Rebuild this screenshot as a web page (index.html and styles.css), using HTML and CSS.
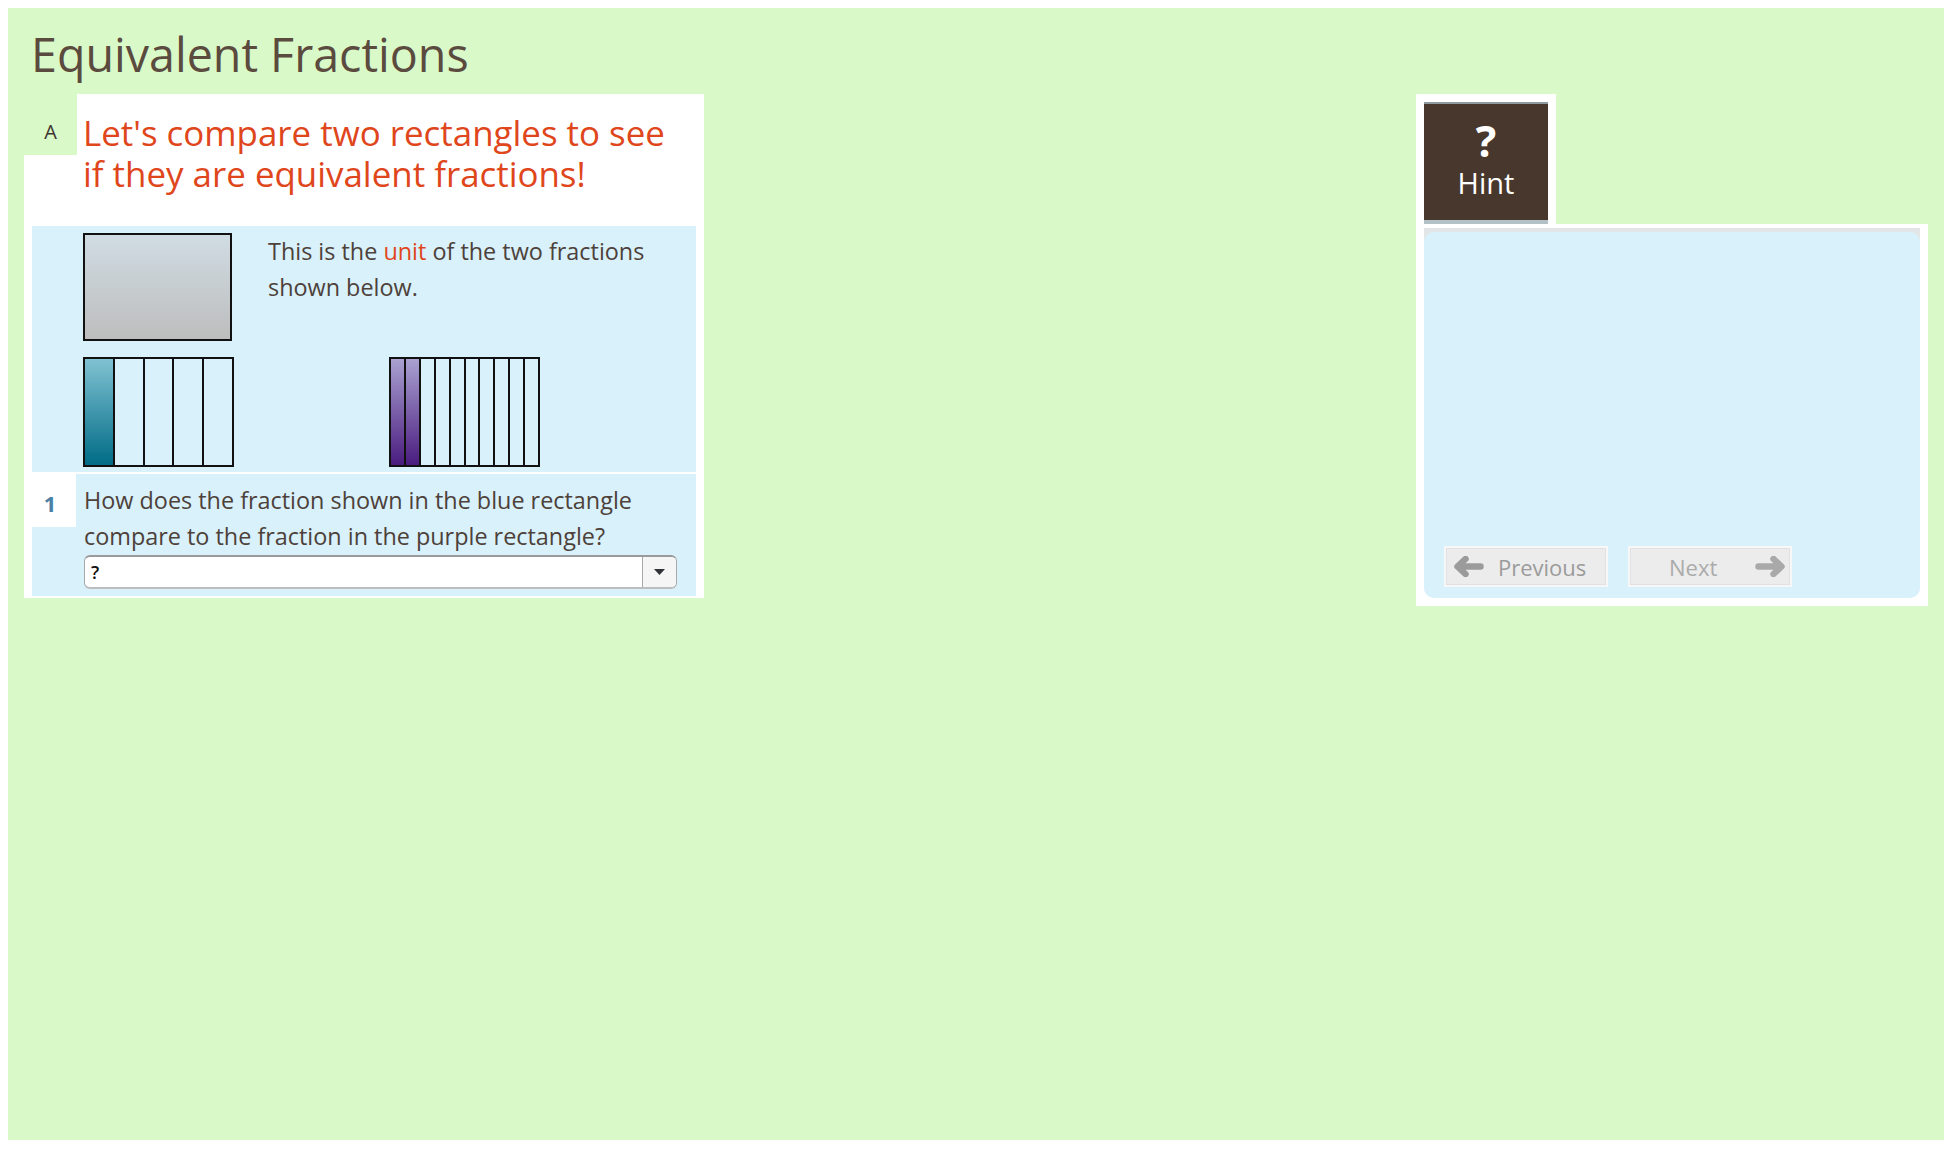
FILE: index.html
```html
<!DOCTYPE html>
<html lang="en">
<head>
<meta charset="utf-8">
<title>Equivalent Fractions</title>
<link rel="stylesheet" href="styles.css">
</head>
<body>
<div class="page">
  <h1 class="title">Equivalent Fractions</h1>
  <div class="main">
    <div class="card">
      <div class="card-head">
        <div class="label label-a">A</div>
        <div class="head-text">Let's compare two rectangles to see<br>if they are equivalent fractions!</div>
      </div>
      <div class="section unit-section">
        <div class="unit-row">
          <div class="unit-rect"></div>
          <p class="body-text unit-text">This is the <span class="hl">unit</span> of the two fractions<br>shown below.</p>
        </div>
        <div class="bars">
          <div class="bar">
            <div class="seg fill-blue"></div><div class="seg"></div><div class="seg"></div><div class="seg"></div><div class="seg"></div>
          </div>
          <div class="bar">
            <div class="seg fill-purple"></div><div class="seg fill-purple"></div><div class="seg"></div><div class="seg"></div><div class="seg"></div><div class="seg"></div><div class="seg"></div><div class="seg"></div><div class="seg"></div><div class="seg"></div>
          </div>
        </div>
      </div>
      <div class="section q-section">
        <div class="label label-1">1</div>
        <div class="q-body">
          <p class="body-text">How does the fraction shown in the blue rectangle<br>compare to the fraction in the purple rectangle?</p>
          <div class="dropdown">
            <span class="dd-value">?</span>
            <span class="dd-btn"><svg width="11" height="6" viewBox="0 0 11 6"><path d="M0 0 H11 L5.5 6 Z" fill="#2f3337"/></svg></span>
          </div>
        </div>
      </div>
    </div>

    <div class="side">
      <div class="hint-tab">
        <div class="hint-btn">
          <span class="hint-q">?</span>
          <span class="hint-label">Hint</span>
        </div>
      </div>
      <div class="hint-panel">
        <div class="hint-frame">
          <div class="hint-body">
            <div class="nav">
              <div class="nav-btn nav-prev">
                <svg class="arrow" width="31" height="21" viewBox="0 0 31 21"><path d="M27.5 10.5 H5 M12.5 3 L4.5 10.5 L12.5 18" fill="none" stroke="#9b9b9b" stroke-width="6.5" stroke-linecap="round" stroke-linejoin="round"/></svg>
                <span class="nav-text">Previous</span>
              </div>
              <div class="nav-btn nav-next">
                <span class="nav-text">Next</span>
                <svg class="arrow" width="31" height="21" viewBox="0 0 31 21"><path d="M3.5 10.5 H26 M18.5 3 L26.5 10.5 L18.5 18" fill="none" stroke="#a9a9a9" stroke-width="6.5" stroke-linecap="round" stroke-linejoin="round"/></svg>
              </div>
            </div>
          </div>
        </div>
      </div>
    </div>
  </div>
</div>
</body>
</html>
```

FILE: styles.css
```css
html, body {
  margin: 0;
  padding: 0;
  background: #ffffff;
}
body {
  margin: 8px;
  font-family: "Open Sans", "Noto Sans", sans-serif;
}
.page {
  background: #d9f9c8;
  min-height: 1132px;
  box-sizing: border-box;
  padding: 19px 16px 0 16px;
}
.title {
  margin: 0 0 13px 7px;
  font-size: 46.6px;
  line-height: 54px;
  font-weight: 400;
  color: #5b4a3e;
}
.main {
  display: flex;
  justify-content: space-between;
  align-items: flex-start;
}

/* ---------- question card ---------- */
.card {
  width: 680px;
  box-sizing: border-box;
  background: #ffffff;
  padding: 0 8px 2px 8px;
}
.card-head {
  display: flex;
  align-items: flex-start;
}
.label {
  flex: none;
  margin-left: -8px;
  text-align: center;
  box-sizing: border-box;
}
.label-a {
  width: 53px;
  height: 61px;
  background: #d9f9c8;
  padding-top: 26px;
  font-size: 20px;
  line-height: 24px;
  color: #3d3530;
}
.head-text {
  flex: 1;
  padding: 18px 0 32px 6px;
  font-size: 34.9px;
  line-height: 41px;
  color: #e0461b;
  white-space: nowrap;
}
.section {
  background: #d9f1fa;
}
.body-text {
  margin: 0;
  font-size: 23.4px;
  line-height: 36px;
  color: #4d413a;
  white-space: nowrap;
}
.hl {
  color: #e0461b;
}
.unit-section {
  padding: 7px 8px 5px 51px;
}
.unit-row {
  display: flex;
  align-items: flex-start;
}
.unit-rect {
  flex: none;
  width: 149px;
  height: 108px;
  box-sizing: border-box;
  border: 2px solid #111111;
  background: linear-gradient(#d0dce3, #bdbdbd);
}
.unit-text {
  margin-left: 36px;
}
.bars {
  display: flex;
  gap: 155px;
  margin-top: 16px;
}
.bar {
  width: 151px;
  height: 110px;
  box-sizing: border-box;
  border: 2px solid #111111;
  display: flex;
}
.seg {
  flex: 1;
}
.seg + .seg {
  border-left: 2px solid #111111;
}
.fill-blue {
  background: linear-gradient(#80c2d2, #006b86);
}
.fill-purple {
  background: linear-gradient(#a9a1d1, #4a1c7f);
}
.q-section {
  margin-top: 2px;
  display: flex;
  align-items: flex-start;
}
.label-1 {
  width: 52px;
  height: 53px;
  background: #ffffff;
  padding-top: 17px;
  font-size: 22px;
  line-height: 24px;
  font-weight: 700;
  color: #4b80a5;
}
.q-body {
  flex: 1;
  padding: 8px 0 7px 8px;
}
.dropdown {
  margin: 1px 0 0 0;
  width: 593px;
  height: 34px;
  box-sizing: border-box;
  display: flex;
  align-items: stretch;
  background: #ffffff;
  border: 1px solid #a9a9a9;
  border-top: 2px solid #9a9a9a;
  border-bottom: 2px solid #bdbdbd;
  border-radius: 6px;
  overflow: hidden;
}
.dd-value {
  flex: 1;
  padding-left: 6px;
  font-size: 18px;
  line-height: 30px;
  font-weight: 600;
  color: #111111;
}
.dd-btn {
  flex: none;
  width: 33px;
  display: flex;
  align-items: center;
  justify-content: center;
  background: #f5f5f5;
  border-left: 1px solid #a9a9a9;
}

/* ---------- hint side ---------- */
.side {
  width: 512px;
}
.hint-tab {
  width: 140px;
  box-sizing: border-box;
  background: #ffffff;
  padding: 8px 8px 0 8px;
}
.hint-btn {
  height: 122px;
  box-sizing: border-box;
  background: #48372d;
  border-top: 2px solid #8e9ba0;
  border-bottom: 4px solid #b3c1c6;
  padding-top: 15px;
  display: flex;
  flex-direction: column;
  align-items: center;
  color: #ffffff;
}
.hint-q {
  font-size: 43px;
  line-height: 43px;
  font-weight: 700;
}
.hint-label {
  margin-top: 5px;
  font-size: 29px;
  line-height: 32px;
}
.hint-panel {
  background: #ffffff;
  padding: 4px 8px 8px 8px;
}
.hint-frame {
  padding-top: 4px;
  background: linear-gradient(#e3e6e6 0, #e3e6e6 16px, #ffffff 16px);
}
.hint-body {
  height: 366px;
  box-sizing: border-box;
  background: #d9f1fa;
  border-radius: 10px;
  display: flex;
  flex-direction: column;
  justify-content: flex-end;
  padding: 0 20px 11px 20px;
}
.nav {
  display: flex;
  gap: 20px;
}
.nav-btn {
  width: 164px;
  height: 41px;
  box-sizing: border-box;
  display: flex;
  align-items: center;
  background: #ececec;
  border: 2px solid #f7f7f7;
  box-shadow: inset 0 0 0 1px #e1e1e1;
  font-size: 22px;
  line-height: 22px;
}
.arrow {
  flex: none;
  display: block;
}
.nav-prev {
  padding-left: 7px;
  color: #9b9b9b;
}
.nav-prev .nav-text {
  margin-left: 14px;
}
.nav-next {
  padding-left: 39px;
  padding-right: 4px;
  color: #ababab;
}
.nav-next .arrow {
  margin-left: auto;
}
```
